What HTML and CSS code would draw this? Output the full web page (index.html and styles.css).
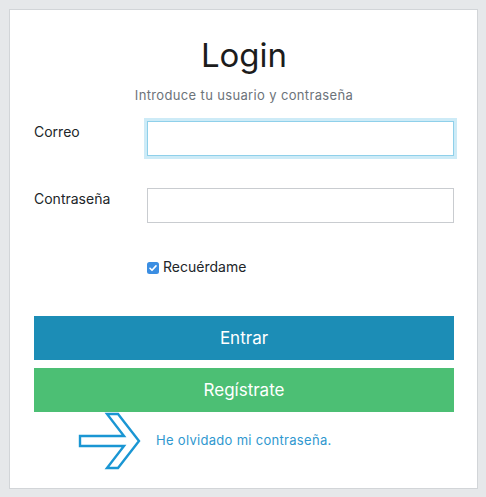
FILE: index.html
```html
<!DOCTYPE html>
<html lang="es">
<head>
<meta charset="utf-8">
<title>Login</title>
<link rel="stylesheet" href="styles.css">
</head>
<body>
  <div class="card">
    <h1 class="title">Login</h1>
    <p class="subtitle">Introduce tu usuario y contraseña</p>
    <form class="form">
      <div class="row row-email">
        <label class="label" for="email">Correo</label>
        <input class="input input-focus" id="email" type="text">
      </div>
      <div class="row row-pass">
        <label class="label" for="pass">Contraseña</label>
        <input class="input" id="pass" type="password">
      </div>
      <div class="remember">
        <span class="check">
          <svg width="12" height="12" viewBox="0 0 12 12"><rect x="0" y="0" width="12" height="12" rx="2.5" fill="#3b8ee2"/><path d="M3 6.3 L5 8.3 L9 3.9" fill="none" stroke="#fff" stroke-width="1.6" stroke-linecap="round" stroke-linejoin="round"/></svg>
        </span>
        <span class="remember-text">Recuérdame</span>
      </div>
      <button class="btn btn-login" type="button">Entrar</button>
      <button class="btn btn-register" type="button">Regístrate</button>
      <div class="forgot">
        <svg class="arrow" width="64" height="58" viewBox="0 0 64 58"><polygon points="2,24 46,24 29,2 40,2 61,29 40,56 29,56 46,34 2,34" fill="#fff" stroke="#1a96d3" stroke-width="2.4" stroke-linejoin="miter"/></svg>
        <a class="forgot-link" href="#">He olvidado mi contraseña.</a>
      </div>
    </form>
  </div>
</body>
</html>
```

FILE: styles.css
```css
* { box-sizing: border-box; }

html, body {
  margin: 0;
  padding: 0;
  background: #e6e8ea;
  font-family: Inter, "Noto Sans", "Liberation Sans", sans-serif;
  color: #212529;
}

body {
  padding: 9px 8px 8px 9px;
}

.card {
  width: 469px;
  height: 480px;
  background: #fff;
  border: 1px solid #d2d5d8;
  padding: 25px 23px 0 24px;
}

.title {
  margin: 0;
  text-align: center;
  font-size: 33px;
  line-height: 40px;
  font-weight: 400;
  color: #1c1c1c;
}

.subtitle {
  margin: 11px 0 0;
  text-align: center;
  font-size: 13px;
  line-height: 18px;
  letter-spacing: 0.35px;
  color: #6c737a;
}

.form {
  display: flex;
  flex-direction: column;
}

.row {
  display: flex;
  align-items: flex-start;
}

.row-email { margin-top: 17px; }
.row-pass { margin-top: 32px; }

.label {
  width: 113px;
  flex: none;
  font-size: 14px;
  line-height: 20px;
  padding-top: 1px;
  color: #212529;
}

.input {
  width: 307px;
  height: 35px;
  border: 1px solid #c9ccd0;
  border-radius: 0;
  background: #fff;
  outline: none;
  margin: 0;
  padding: 0 8px;
  font: inherit;
}

.input-focus {
  border-color: #8fd0ea;
  box-shadow: 0 0 0 3px #cdebf7;
}

.remember {
  margin-top: 34px;
  margin-left: 113px;
  display: flex;
  align-items: center;
  height: 20px;
}

.check {
  display: flex;
  width: 12px;
  height: 12px;
  margin-top: 1px;
}

.remember-text {
  margin-left: 4px;
  font-size: 14px;
  line-height: 20px;
  color: #212529;
}

.btn {
  display: block;
  width: 420px;
  height: 44px;
  border: none;
  border-radius: 0;
  margin: 0;
  padding: 0;
  color: #fff;
  font-family: inherit;
  font-size: 17px;
  font-weight: 400;
  cursor: pointer;
}

.btn-login {
  margin-top: 39px;
  background: #1c8db6;
}

.btn-register {
  margin-top: 8px;
  background: #4cbf74;
}

.forgot {
  display: flex;
  align-items: center;
  height: 58px;
  padding-left: 44px;
}

.arrow {
  flex: none;
  display: block;
}

.forgot-link {
  margin-left: 14px;
  margin-top: -2px;
  font-size: 13px;
  letter-spacing: 0.3px;
  color: #2f98cf;
  text-decoration: none;
}
```
